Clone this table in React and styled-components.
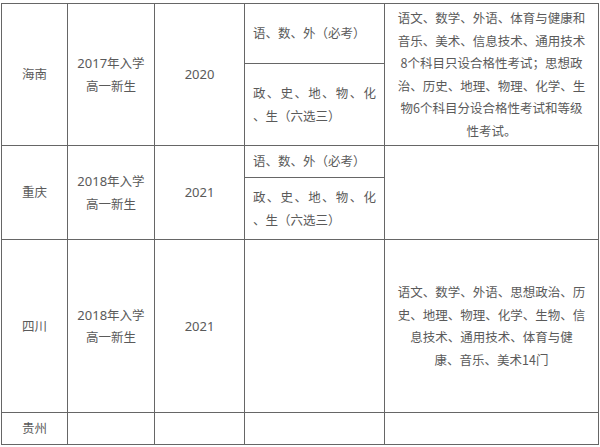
import React from "react";
import styled, { createGlobalStyle } from "styled-components";

const Global = createGlobalStyle`
  html, body { margin: 0; padding: 0; background: #ffffff; }
  body { font-family: "Noto Sans CJK SC", "Noto Sans", sans-serif; }
`;

const Page = styled.div`
  width: 600px;
  height: 447px;
  overflow: hidden;
  background: #fff;
  padding: 3px 0 0 1px;
  box-sizing: border-box;
`;

const Table = styled.table`
  border-collapse: collapse;
  table-layout: fixed;
  width: 597px;
  color: #5a5a5a;
  font-size: 12.5px;
  line-height: 22.5px;
`;

const Row = styled.tr`
  height: ${(p) => p.$h}px;
`;

const Cell = styled.td`
  border: 1px solid #666666;
  padding: 0 ${(p) => (p.$pad != null ? p.$pad : 6)}px;
  text-align: ${(p) => p.$align || "center"};
  vertical-align: middle;
  box-sizing: border-box;
`;

const Year = styled.span`
  font-family: "Noto Sans", "Noto Sans CJK SC", sans-serif;
  font-size: 13px;
`;

const Subject = styled.div`
  text-align: justify;
  line-break: anywhere;
  word-break: break-all;
`;

export default function App() {
  return (
    <Page>
      <Global />
      <Table>
        <colgroup>
          <col style={{ width: 66 }} />
          <col style={{ width: 87 }} />
          <col style={{ width: 90 }} />
          <col style={{ width: 140 }} />
          <col style={{ width: 214 }} />
        </colgroup>
        <tbody>
          <Row $h={60}>
            <Cell rowSpan={2}>海南</Cell>
            <Cell rowSpan={2}><Year>2017</Year>年入学<br />高一新生</Cell>
            <Cell rowSpan={2}><Year>2020</Year></Cell>
            <Cell $align="left" $pad={8}>语、数、外（必考）</Cell>
            <Cell rowSpan={2} $pad={4}>
              语文、数学、外语、体育与健康和<br />
              音乐、美术、信息技术、通用技术<br />
              8个科目只设合格性考试；思想政<br />
              治、历史、地理、物理、化学、生<br />
              物6个科目分设合格性考试和等级<br />
              性考试。
            </Cell>
          </Row>
          <Row $h={82}>
            <Cell $align="left" $pad={8}>
              <Subject>政、史、地、物、化、生（六选三）</Subject>
            </Cell>
          </Row>
          <Row $h={32}>
            <Cell rowSpan={2}>重庆</Cell>
            <Cell rowSpan={2}><Year>2018</Year>年入学<br />高一新生</Cell>
            <Cell rowSpan={2}><Year>2021</Year></Cell>
            <Cell $align="left" $pad={8}>语、数、外（必考）</Cell>
            <Cell rowSpan={2} />
          </Row>
          <Row $h={62}>
            <Cell $align="left" $pad={8}>
              <Subject>政、史、地、物、化、生（六选三）</Subject>
            </Cell>
          </Row>
          <Row $h={173}>
            <Cell>四川</Cell>
            <Cell><Year>2018</Year>年入学<br />高一新生</Cell>
            <Cell><Year>2021</Year></Cell>
            <Cell />
            <Cell $pad={4}>
              语文、数学、外语、思想政治、历<br />
              史、地理、物理、化学、生物、信<br />
              息技术、通用技术、体育与健<br />
              康、音乐、美术14门
            </Cell>
          </Row>
          <Row $h={32}>
            <Cell>贵州</Cell>
            <Cell />
            <Cell />
            <Cell />
            <Cell />
          </Row>
        </tbody>
      </Table>
    </Page>
  );
}
